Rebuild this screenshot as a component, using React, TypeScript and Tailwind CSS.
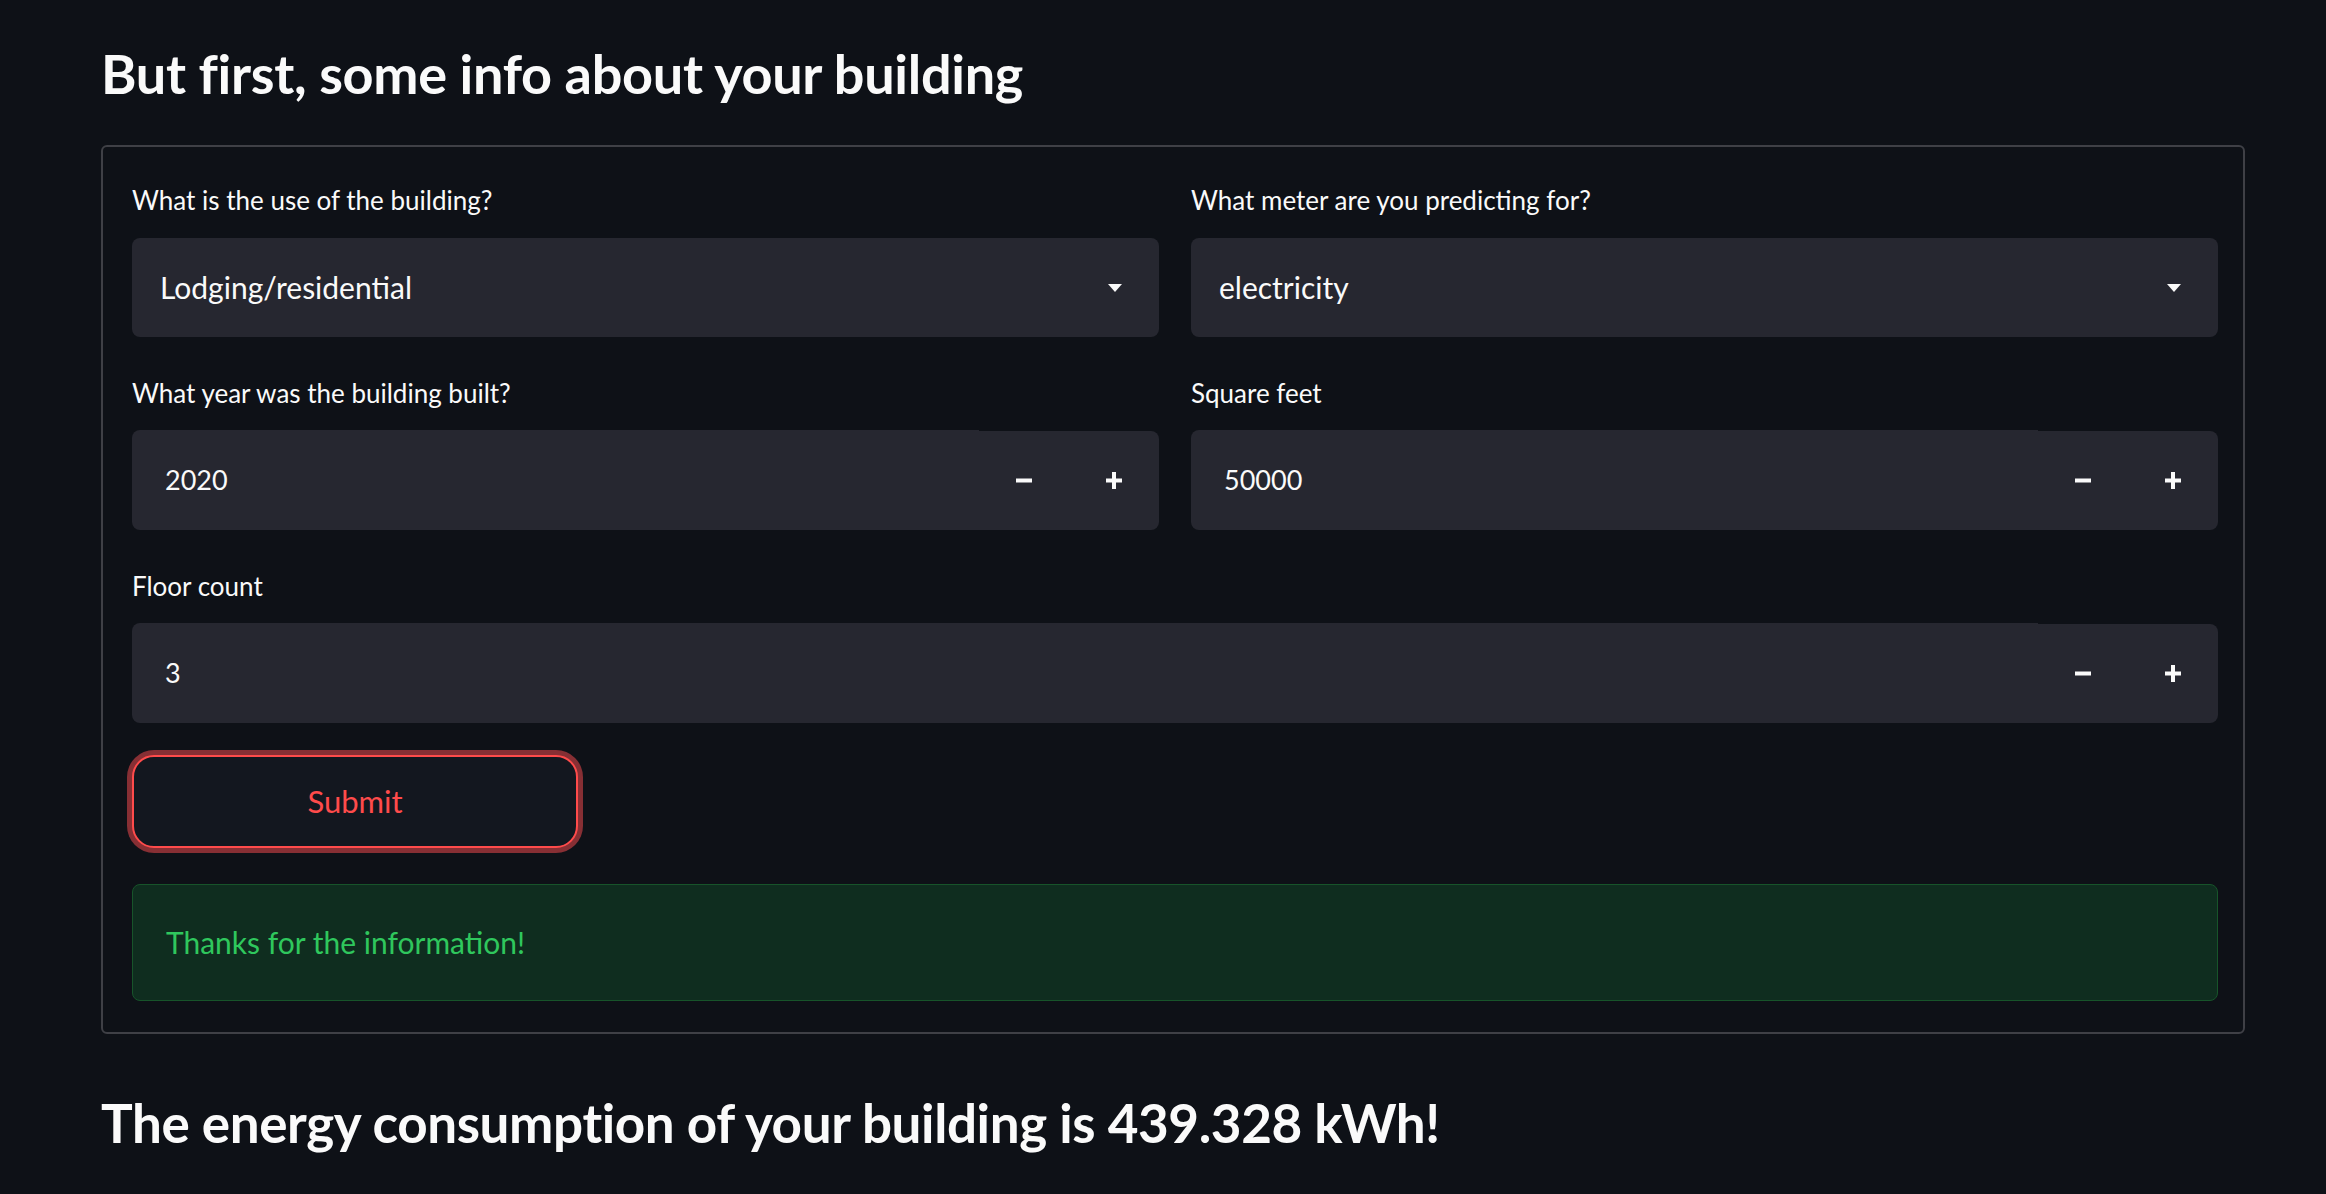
import type { ReactNode } from 'react'

function Label({ children }: { children: ReactNode }) {
  return <div className="mb-[23px] text-[26px] leading-[30px] text-[#fafafa]">{children}</div>
}

function Chevron() {
  return (
    <svg width="14" height="8" viewBox="0 0 14 8">
      <path d="M0 0 L14 0 L7 8 Z" fill="#fafafa" />
    </svg>
  )
}

function Minus() {
  return (
    <svg width="16" height="17" viewBox="0 0 16 17">
      <rect x="0" y="6.5" width="16" height="4" fill="#fafafa" />
    </svg>
  )
}

function Plus() {
  return (
    <svg width="16" height="17" viewBox="0 0 16 17">
      <rect x="0" y="6.5" width="16" height="4" fill="#fafafa" />
      <rect x="6" y="0" width="4" height="17" fill="#fafafa" />
    </svg>
  )
}

function SelectBox({ value }: { value: string }) {
  return (
    <div className="flex h-[99px] items-center justify-between rounded-[8px] bg-[#262730] pl-[28px] pr-[37px] text-[30px] text-[#fafafa]">
      <span>{value}</span>
      <Chevron />
    </div>
  )
}

function NumberInput({ value }: { value: string }) {
  return (
    <div className="flex h-[99px]">
      <div className="-mt-px flex flex-1 items-center rounded-l-[8px] bg-[#262730] pl-[33px] text-[27px] text-[#fafafa]">
        {value}
      </div>
      <div className="flex w-[180px] rounded-r-[8px] bg-[#262730]">
        <button className="flex flex-1 items-center justify-center">
          <Minus />
        </button>
        <button className="flex flex-1 items-center justify-center">
          <Plus />
        </button>
      </div>
    </div>
  )
}

export default function App() {
  return (
    <div className="min-h-screen w-full bg-[#0e1117] pl-[101px] pr-[81px] pt-[42px] pb-[40px] font-['Lato',sans-serif] text-[#fafafa]">
      <h2 className="text-[54px] font-bold leading-[64px] tracking-[-0.3px]">
        But first, some info about your building
      </h2>

      <div className="mt-[39px] rounded-[6px] border-2 border-[#3f4046] pl-[29px] pr-[25px] pt-[38px] pb-[31px]">
        <div className="grid grid-cols-2 gap-x-[32px] gap-y-[41px]">
          <div>
            <Label>What is the use of the building?</Label>
            <SelectBox value="Lodging/residential" />
          </div>
          <div>
            <Label>What meter are you predicting for?</Label>
            <SelectBox value="electricity" />
          </div>
          <div>
            <Label>What year was the building built?</Label>
            <NumberInput value="2020" />
          </div>
          <div>
            <Label>Square feet</Label>
            <NumberInput value="50000" />
          </div>
          <div className="col-span-2">
            <Label>Floor count</Label>
            <NumberInput value="3" />
          </div>
        </div>

        <button className="mt-[32px] flex h-[93px] w-[446px] items-center justify-center rounded-[22px] border-2 border-[#ff4b4b] bg-[#13171f] text-[31px] text-[#ff4b4b] shadow-[0_0_0_5px_#872f34]">
          Submit
        </button>

        <div className="mt-[36px] flex h-[117px] items-center rounded-[8px] border border-[#17542a] bg-[#0f2d1f] pl-[33px] text-[30px] text-[#2fc75d]">
          Thanks for the information!
        </div>
      </div>

      <h2 className="mt-[57px] text-[53px] font-bold leading-[64px] tracking-[-0.4px]">
        The energy consumption of your building is 439.328 kWh!
      </h2>
    </div>
  )
}
